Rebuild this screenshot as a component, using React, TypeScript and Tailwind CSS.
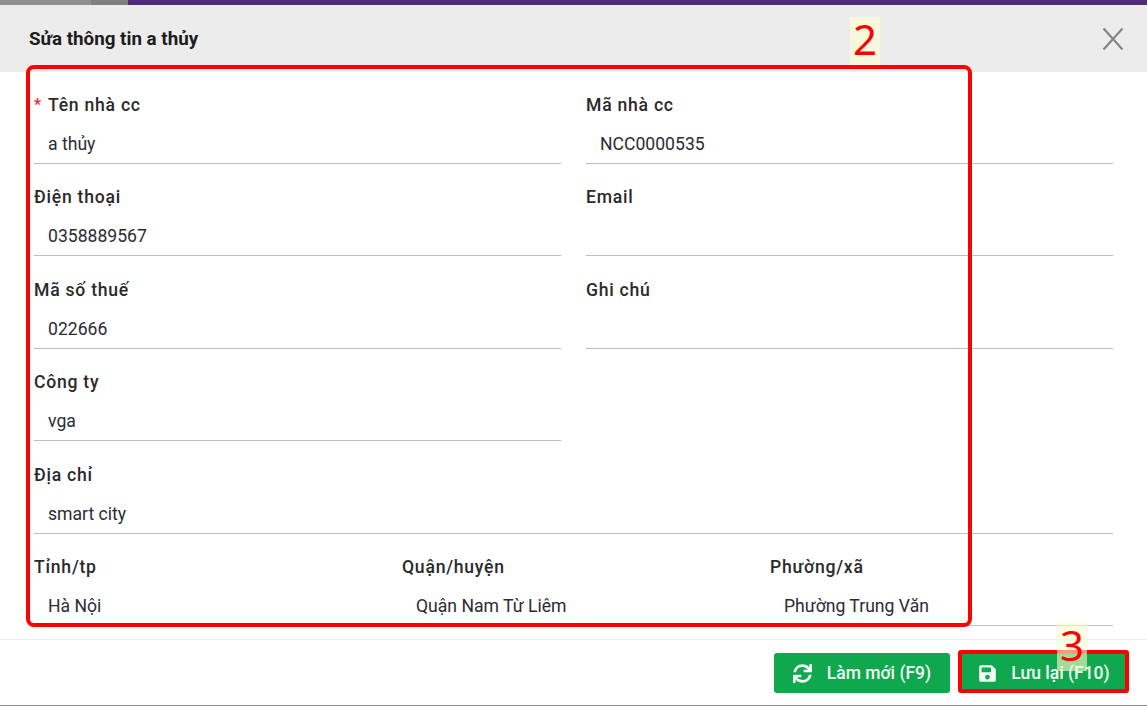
import { FaSave, FaSync } from "react-icons/fa";

type FieldProps = {
  label: string;
  value?: string;
  required?: boolean;
  className?: string;
};

function Field({ label, value, required, className }: FieldProps) {
  return (
    <div className={`h-[92.5px] px-3 ${className ?? ""}`}>
      <div className="relative h-[20px] text-[17.6px] leading-[20px] font-medium tracking-[0.75px] text-[#2a2a2a]">
        {required && (
          <span className="absolute left-0 top-0 text-[16px] text-[#f5222d]">*</span>
        )}
        <span className={required ? "pl-[14px]" : ""}>{label}</span>
      </div>
      <div className="mt-[8px] h-[41px] border-b border-[#bdbdbd] pl-[14px] pt-[9px] text-[17.6px] leading-[24px] text-[#2b2b33]">
        {value}
      </div>
    </div>
  );
}

export default function App() {
  return (
    <div
      className="relative h-[706px] w-[1147px] overflow-hidden bg-white"
      style={{ fontFamily: "Roboto, 'Liberation Sans', sans-serif" }}
    >
      {/* thanh trên cùng */}
      <div className="flex h-[5px]">
        <div className="w-[91px] bg-[#8f8f8f]" />
        <div className="w-[37px] bg-[#808080]" />
        <div className="flex-1 bg-[#4f2c7a]" />
      </div>

      <div className="flex h-[67px] items-center justify-between bg-[#ececec] pl-[29px] pr-[23px]">
        <h3 className="text-[18.8px] leading-[24px] font-bold text-[#1c1c1c]">Sửa thông tin a thủy</h3>
        <svg width="22" height="24" viewBox="0 0 22 24" fill="none" stroke="#858585" strokeWidth="2.2">
          <path d="M1.5 1.5 L20.5 22.5 M20.5 1.5 L1.5 22.5" />
        </svg>
      </div>

      <div className="h-[568px] border-b border-[#ececec] pl-[22px] pr-[22px] pt-[22.75px]">
        <div className="grid grid-cols-[551px_551px] gap-x-[1px]">
          <Field label="Tên nhà cc" value="a thủy" required />
          <Field label="Mã nhà cc" value="NCC0000535" />
          <Field label="Điện thoại" value="0358889567" />
          <Field label="Email" />
          <Field label="Mã số thuế" value="022666" />
          <Field label="Ghi chú" />
          <Field label="Công ty" value="vga" />
          <div />
          <Field className="col-span-2" label="Địa chỉ" value="smart city" />
          <div className="col-span-2 grid grid-cols-[368px_368px_367px]">
            <Field label="Tỉnh/tp" value="Hà Nội" />
            <Field label="Quận/huyện" value="Quận Nam Từ Liêm" />
            <Field label="Phường/xã" value="Phường Trung Văn" />
          </div>
        </div>
      </div>

      <div className="flex justify-end gap-[10px] pr-[19px] pt-[13px]">
        <button className="flex h-[40px] w-[176px] items-center justify-center gap-[15px] rounded-[3px] bg-[#0fa84f] text-[17.5px] font-medium text-[#f2fbf5]">
          <FaSync className="text-[19px]" />
          Làm mới (F9)
        </button>
        <button className="flex h-[40px] w-[168px] items-center justify-center gap-[14px] rounded-[3px] bg-[#0fa84f] text-[17.5px] font-medium text-[#f2fbf5]">
          <FaSave className="text-[19px]" />
          Lưu lại (F10)
        </button>
      </div>

      <div className="absolute bottom-0 left-0 right-0 h-px bg-[#8a8a8a]" />

      {/* chú thích đỏ */}
      <div className="absolute left-[26px] top-[65px] h-[562px] w-[946px] rounded-[8px] border-[4px] border-[#ff0000]" />
      <div className="absolute left-[958px] top-[650px] h-[43px] w-[171px] rounded-[3px] border-[4px] border-[#ff0000]" />
      <div className="absolute left-[850px] top-[17px] flex h-[48px] w-[30px] items-center justify-center bg-[#f7f7dc] pb-[4px] text-[42px] leading-none text-[#ff0000]" style={{ fontFamily: "'Noto Sans', sans-serif" }}>
        2
      </div>
      <div className="absolute left-[1057px] top-[623px] flex h-[48px] w-[30px] items-center justify-center bg-[#ffffd0]/60 pb-[4px] text-[42px] leading-none text-[#ff0000]" style={{ fontFamily: "'Noto Sans', sans-serif" }}>
        3
      </div>
    </div>
  );
}
